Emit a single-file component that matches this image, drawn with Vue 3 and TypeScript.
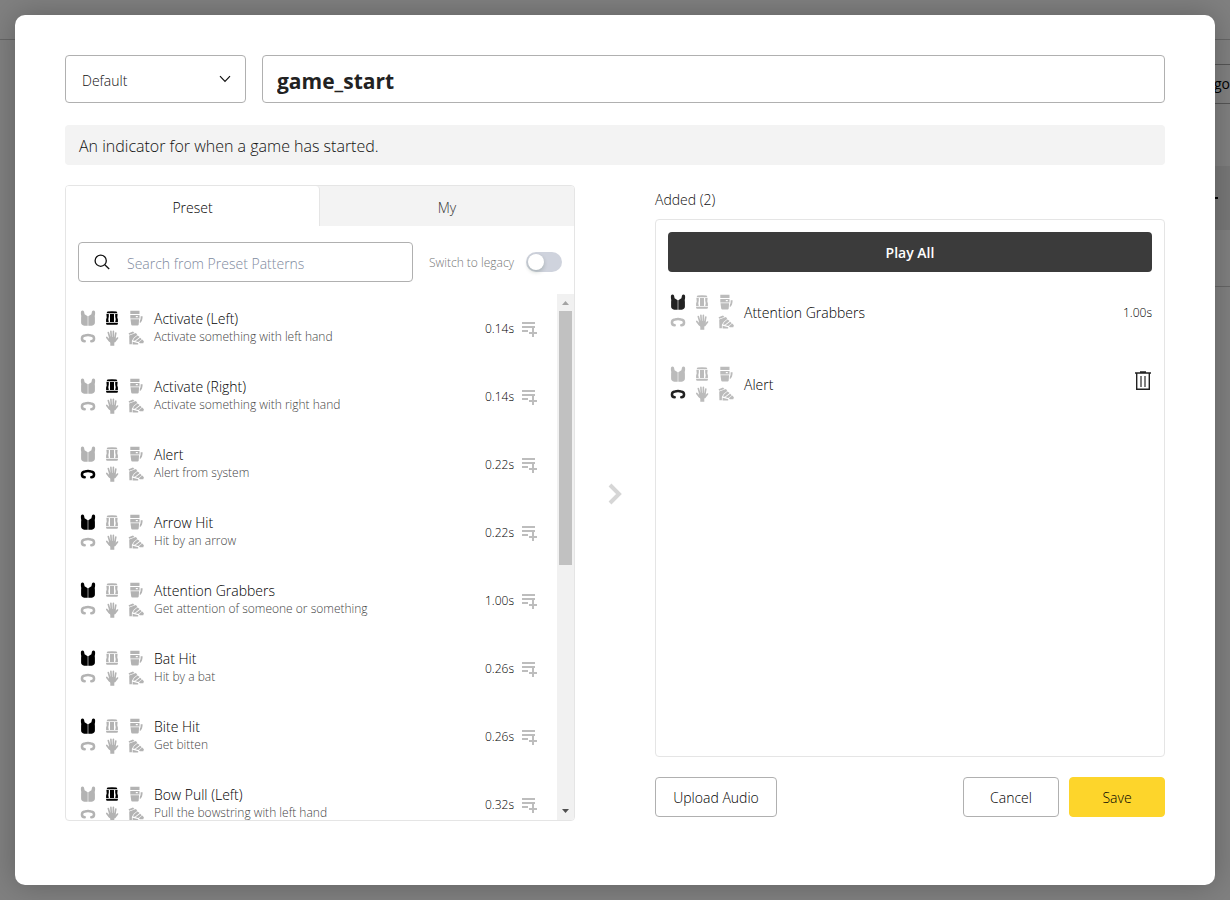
<script setup lang="ts">
import { computed, ref } from 'vue'

type Part = 'vest' | 'head' | 'arm' | 'face' | 'hand' | 'foot'

interface Pattern {
  name: string
  description: string
  duration: string
  active: Part
}

interface AddedPattern {
  name: string
  active: Part
  duration?: string
}

const parts: Part[] = ['vest', 'head', 'arm', 'face', 'hand', 'foot']

const patterns: Pattern[] = [
  { name: 'Activate (Left)', description: 'Activate something with left hand', duration: '0.14s', active: 'head' },
  { name: 'Activate (Right)', description: 'Activate something with right hand', duration: '0.14s', active: 'head' },
  { name: 'Alert', description: 'Alert from system', duration: '0.22s', active: 'face' },
  { name: 'Arrow Hit', description: 'Hit by an arrow', duration: '0.22s', active: 'vest' },
  { name: 'Attention Grabbers', description: 'Get attention of someone or something', duration: '1.00s', active: 'vest' },
  { name: 'Bat Hit', description: 'Hit by a bat', duration: '0.26s', active: 'vest' },
  { name: 'Bite Hit', description: 'Get bitten', duration: '0.26s', active: 'vest' },
  { name: 'Bow Pull (Left)', description: 'Pull the bowstring with left hand', duration: '0.32s', active: 'head' },
]

const added = ref<AddedPattern[]>([
  { name: 'Attention Grabbers', active: 'vest', duration: '1.00s' },
  { name: 'Alert', active: 'face' },
])

const category = ref('Default')
const eventName = ref('game_start')
const search = ref('')
const legacy = ref(false)
const tab = ref<'preset' | 'my'>('preset')

const visible = computed(() =>
  patterns.filter((p) => p.name.toLowerCase().includes(search.value.toLowerCase())),
)

function remove(index: number) {
  added.value.splice(index, 1)
}
</script>

<template>
  <div class="screen">
    <div class="page" aria-hidden="true">
      <div class="page-header"></div>
      <div class="page-tools"><span>go</span></div>
      <div class="page-band"><i></i></div>
      <div class="page-row"></div>
    </div>

    <div class="overlay">
      <form class="modal" role="dialog" aria-label="Edit event" @submit.prevent>
        <div class="top">
          <div class="select">
            <select v-model="category" aria-label="Category">
              <option>Default</option>
            </select>
            <svg viewBox="0 0 12 8" width="12" height="8"><path d="M1 1.2 6 6.4 11 1.2" fill="none" stroke="#111" stroke-width="1.2" /></svg>
          </div>
          <input v-model="eventName" class="event-name" type="text" aria-label="Event name" />
        </div>
        <p class="summary">An indicator for when a game has started.</p>

        <div class="columns">
          <section class="library">
            <div class="tabs" role="tablist">
              <button type="button" role="tab" :class="{ current: tab === 'preset' }" :aria-selected="tab === 'preset'" @click="tab = 'preset'">Preset</button>
              <button type="button" role="tab" :class="{ current: tab === 'my' }" :aria-selected="tab === 'my'" @click="tab = 'my'">My</button>
            </div>
            <div class="filters">
              <label class="search">
                <svg viewBox="0 0 16 16" width="16" height="16"><g fill="none" stroke="#111" stroke-width="1.3"><circle cx="6.7" cy="6.7" r="5.6" /><path d="m10.8 10.8 4.4 4.2" /></g></svg>
                <input v-model="search" type="text" placeholder="Search from Preset Patterns" aria-label="Search from Preset Patterns" />
              </label>
              <label class="legacy">
                <span>Switch to legacy</span>
                <input v-model="legacy" type="checkbox" role="switch" />
              </label>
            </div>
            <div class="scroller">
              <ul class="patterns">
                <li v-for="p in visible" :key="p.name">
                  <div class="parts">
                    <svg v-for="part in parts" :key="part" viewBox="0 0 16 16" width="16" height="16" :class="{ on: part === p.active }"><use :href="'#part-' + part" /></svg>
                  </div>
                  <div class="text">
                    <div class="name">{{ p.name }}</div>
                    <div class="description">{{ p.description }}</div>
                  </div>
                  <span class="duration">{{ p.duration }}</span>
                  <button type="button" class="icon-button" :aria-label="'Add ' + p.name">
                    <svg viewBox="0 0 16 16" width="16" height="16"><path fill="#bdbdbd" d="M0 1h13v2H0zM0 5h13v2H0zM0 9h6v2H0zM10 7h2v4h3v2h-3v3h-2v-3H7v-2h3z" /></svg>
                  </button>
                </li>
              </ul>
              <div class="bar" aria-hidden="true">
                <svg viewBox="0 0 17 17" width="17" height="17"><path fill="#a3a3a3" d="M5 11h7L8.5 7z" /></svg>
                <div class="thumb"></div>
                <div class="rest"></div>
                <svg viewBox="0 0 17 17" width="17" height="17"><path fill="#505050" d="M5 6h7l-3.500 4z" /></svg>
              </div>
            </div>
          </section>

          <div class="arrow">
            <svg viewBox="0 0 14 22" width="14" height="22"><path d="m2 2 9 9-9 9" fill="none" stroke="#d6d6d6" stroke-width="4" /></svg>
          </div>

          <section class="selection">
            <h2>Added ({{ added.length }})</h2>
            <div class="added">
              <button type="button" class="play">Play All</button>
              <ul>
                <li v-for="(a, i) in added" :key="a.name">
                  <div class="parts">
                    <svg v-for="part in parts" :key="part" viewBox="0 0 16 16" width="16" height="16" :class="{ on: part === a.active }"><use :href="'#part-' + part" /></svg>
                  </div>
                  <div class="text"><div class="name">{{ a.name }}</div></div>
                  <span v-if="a.duration" class="duration">{{ a.duration }}</span>
                  <button v-else type="button" class="icon-button trash" aria-label="Remove" @click="remove(i)">
                    <svg viewBox="0 0 16 20" width="16" height="20"><path d="M5 .9h6M0 2h16M1.700 2v16.300h12.600V2" fill="none" stroke="#222" stroke-width="1.400" /><path d="M6 5v11M10 5v11" stroke="#555" stroke-width="1.500" /></svg>
                  </button>
                </li>
              </ul>
            </div>
            <div class="actions">
              <button type="button" class="upload">Upload Audio</button>
              <button type="button" class="cancel">Cancel</button>
              <button type="submit" class="save">Save</button>
            </div>
          </section>
        </div>
      </form>
    </div>

    <svg class="defs" width="0" height="0" aria-hidden="true">
      <defs>
        <g id="part-vest">
          <path d="M.9 1.900Q1 .4 2.300.4T4 1.600L4.600 4.300 7.700 6.300V15.700H4.200Q1.100 15 1.100 12.500V8Q1.500 6 .9 4zM15.100 1.900Q15 .4 13.700.4T12 1.600L11.400 4.300 8.300 6.300V15.700H11.800Q14.900 15 14.900 12.500V8Q14.500 6 15.100 4z" />
        </g>
        <g id="part-head">
          <path d="M3.500 1.500Q8 .8 12.500 1.500L13.500 3.200H2.500zM2.400 4H4.800V6.600L4.300 9.200 4.800 12H2.100V9.500L2.700 7.500zM13.600 4H11.200V6.600L11.700 9.200 11.200 12H13.900V9.500L13.300 7.500zM6 4h4v8H6zM2.100 12.800H13.900V13.800Q13.900 14.800 12.800 14.800H3.200Q2.100 14.800 2.100 13.800z" />
        </g>
        <g id="part-arm">
          <path fill-rule="evenodd" d="M2.300.8h9.200v3.200H2.300zM2.300 5h9.200v3.500H2.300zM7.800 6v1.300h2V6zM2.500 9.200h8.600L10.700 14.400Q10.500 15.400 9.600 15.400H4.300Q3.400 15.400 3.200 14.400zM12.700 6.200h1.900Q14.800 11 11.800 13.300V11Q12.900 9.500 12.700 6.200z" />
        </g>
        <g id="part-face">
          <path d="M4.700 11.200C1 11 1 5.900 4.900 5.400 7 5 9 5 11.100 5.400 15 5.900 15 11 11.300 11.200" fill="none" stroke="currentColor" stroke-width="2.500" stroke-linecap="round" />
        </g>
        <g id="part-hand">
          <path d="M4.300 2.600 5.900 8M6.900 1.200 7.300 7.500M9.400 1.400 9.200 7.500M11.800 3 10.800 8.500M2.800 7.400 5.500 11M13.500 8 10.800 11.500" fill="none" stroke="currentColor" stroke-width="1.600" stroke-linecap="round" />
          <path d="M5 7H11.300L11.800 10 10.300 12.800V15.700H6.300V12.800L4.200 10z" />
        </g>
        <g id="part-foot">
          <path d="M.6 3.300 5 1.500 6.400 2.900 1.200 4.700zM1.200 5.600 8 3 9.300 5 6 7.500 3.900 10.800V14.200H1.400zM9.600 5.500 11.600 7.100 6.900 10.700 4.900 10.500 6.500 8zM12.200 7.700 13.700 9.200 10.200 12 7.500 11.300zM14.200 9.600 15.900 11.300 15.300 13.300H11.900L10.900 12.300zM4.600 11.800 10.200 13.200V14.500H4.600z" />
        </g>
      </defs>
    </svg>
  </div>
</template>

<style>
body {
  background: #808080;
}
</style>

<style scoped>
.screen {
  position: relative;
  height: 100vh;
  overflow: hidden;
  background: #808080;
  color: #111;
  font-family: 'Open Sans', 'Noto Sans CJK KR', sans-serif;
  font-size: 14px;
  font-weight: 300;
}
.screen *,
.screen *::before {
  box-sizing: border-box;
}
button,
input,
select {
  margin: 0;
  font: inherit;
  color: inherit;
}
button {
  padding: 0;
  border: 0;
  background: none;
  cursor: pointer;
}
ul {
  margin: 0;
  padding: 0;
  list-style: none;
}
.defs {
  position: absolute;
}
.page {
  position: absolute;
  inset: 0;
}
.page-header {
  height: 40px;
  border-bottom: 1px solid #666;
}
.page-tools {
  height: 40px;
  margin: 24px 0 0 50%;
  border: 1px solid #555;
  border-width: 1px 0;
  line-height: 38px;
  font-weight: 400;
  text-align: right;
  color: #000;
}
.page-band {
  display: flex;
  align-items: center;
  justify-content: flex-end;
  height: 64px;
  margin: 62px 0 0 50%;
  padding-right: 12px;
  background: #787878;
}
.page-band i {
  width: 12px;
  height: 2px;
  background: #000;
}
.page-row {
  height: 57px;
  margin-left: 50%;
  border-bottom: 1px solid #666;
}
.overlay {
  position: relative;
  display: flex;
  height: 100%;
  padding: 15px;
}
.modal {
  display: flex;
  flex: 1;
  flex-direction: column;
  min-width: 0;
  padding: 40px 50px 64px;
  border-radius: 10px;
  background: #fff;
  box-shadow: 0 0 30px rgba(0, 0, 0, 0.25);
}
.top {
  display: flex;
  gap: 16px;
}
.select {
  position: relative;
  width: 181px;
}
.select select {
  width: 100%;
  height: 48px;
  padding: 2px 16px 0;
  border: 1px solid #b0b0b0;
  border-radius: 4px;
  appearance: none;
  background: #fff;
}
.select svg {
  position: absolute;
  top: 20px;
  right: 15px;
  pointer-events: none;
}
.event-name {
  flex: 1;
  min-width: 0;
  height: 48px;
  padding: 4px 14px 0;
  border: 1px solid #b0b0b0;
  border-radius: 4px;
  background: #fff;
  color: #222;
  font-size: 21px;
  font-weight: 700;
}
.summary {
  height: 40px;
  margin: 22px 0 20px;
  padding: 0 14px;
  border-radius: 4px;
  background: #f3f3f3;
  font-size: 16px;
  line-height: 42px;
}
.columns {
  display: grid;
  flex: 1;
  grid-template: minmax(0, 1fr) / minmax(0, 1fr) 80px minmax(0, 1fr);
  min-height: 0;
}
.library,
.selection {
  display: flex;
  flex-direction: column;
}
.library {
  overflow: hidden;
  border: 1px solid #e5e5e5;
  border-radius: 4px;
}
.tabs {
  display: grid;
  flex: none;
  grid-template-columns: 1fr 1fr;
  background: #f3f3f3;
}
.tabs button {
  height: 40px;
  padding-top: 2px;
  color: #333;
}
.tabs .current {
  border-right: 1px solid #e5e5e5;
  border-radius: 0 4px 0 0;
  background: #fff;
  color: #000;
}
.filters {
  display: flex;
  flex: none;
  align-items: center;
  gap: 16px;
  padding: 16px 12px 12px;
}
.search {
  display: flex;
  flex: 1;
  align-items: center;
  gap: 17px;
  min-width: 0;
  height: 40px;
  padding: 0 15px;
  border: 1px solid #b0b0b0;
  border-radius: 4px;
}
.search input {
  flex: 1;
  min-width: 0;
  padding: 2px 0 0;
  border: 0;
  outline: 0;
  background: none;
}
.search input::placeholder {
  color: #808a9e;
}
.legacy {
  display: flex;
  align-items: center;
  justify-content: space-between;
  min-width: 133px;
  color: #777;
  font-size: 12px;
  white-space: nowrap;
}
.legacy input {
  display: flex;
  align-items: center;
  width: 36px;
  height: 20px;
  padding: 0 2px;
  border-radius: 10px;
  appearance: none;
  background: #cfd3dd;
}
.legacy input::before {
  width: 16px;
  height: 16px;
  border-radius: 50%;
  background: #fff;
  box-shadow: 0 2px 4px rgba(0, 35, 11, 0.2);
  content: '';
}
.legacy input:checked {
  justify-content: flex-end;
  background: #fdd52b;
}
.scroller {
  display: flex;
  flex: 1;
  min-height: 0;
}
.patterns {
  flex: 1;
  min-width: 0;
  overflow-y: auto;
  scrollbar-width: none;
}
li {
  display: flex;
  align-items: center;
}
.patterns li {
  height: 68px;
  padding: 0 19px 0 10px;
}
.parts {
  display: grid;
  grid-template-columns: repeat(3, 24px);
  grid-auto-rows: 20px;
  place-items: center;
  margin-right: 6px;
}
.parts svg {
  color: #b3b3b3;
  fill: currentColor;
}
.parts .on {
  color: #000;
}
.text {
  flex: 1;
  min-width: 0;
}
.name {
  line-height: 18px;
  color: #000;
}
.description {
  font-size: 12px;
  line-height: 18px;
  color: #444;
}
.duration {
  font-size: 12px;
  color: #000;
}
.icon-button {
  display: flex;
  margin-left: 8px;
}
.patterns .icon-button {
  padding-top: 2px;
}
.trash {
  padding: 0 1px 6px 0;
}
.bar {
  display: flex;
  flex-direction: column;
  width: 17px;
  background: #f1f1f1;
}
.bar svg {
  flex: none;
}
.thumb {
  flex: 254;
  margin: 0 2px;
  background: #c1c1c1;
}
.rest {
  flex: 238;
}
.arrow {
  display: flex;
  align-items: center;
  justify-content: center;
  padding-bottom: 18px;
}
h2 {
  margin: 5px 0 9px;
  font-size: 14px;
  font-weight: 300;
  line-height: 20px;
}
.added {
  flex: 1;
  min-height: 0;
  padding: 12px;
  border: 1px solid #e5e5e5;
  border-radius: 4px;
}
.play {
  width: 100%;
  height: 40px;
  margin-bottom: 4px;
  border-radius: 4px;
  background: #3b3b3b;
  color: #fff;
  font-weight: 600;
}
.added li {
  height: 72px;
}
.added .parts {
  margin-left: -2px;
}
.added .name {
  padding-top: 2px;
}
.added .parts svg {
  color: #bbb;
}
.added .parts .on {
  color: #222;
}
.actions {
  display: flex;
  gap: 10px;
  padding: 20px 0 4px;
}
.actions button {
  width: 96px;
  height: 40px;
  padding-top: 1px;
  border: 1px solid #b0b0b0;
  border-radius: 4px;
  color: #000;
}
.actions .upload {
  width: 122px;
  margin-right: auto;
}
.actions .save {
  border-color: #fdd52b;
  background: #fdd52b;
}
</style>
